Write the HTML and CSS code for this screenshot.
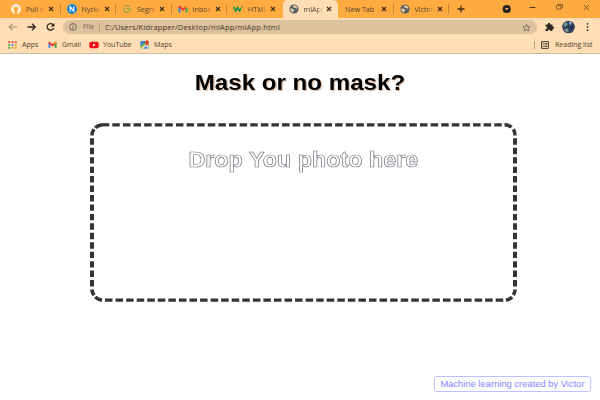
FILE: index.html
```
<!DOCTYPE html>
<html lang="en">
<head>
<meta charset="utf-8">
<title>mlApp</title>
<link rel="stylesheet" href="styles.css">
</head>
<body>
<svg class="defs" width="0" height="0" aria-hidden="true">
  <symbol id="x" viewBox="0 0 6 6"><path d="M1 1l4 4M5 1L1 5" stroke="#44301a" stroke-width="1.25"/></symbol>
  <symbol id="globe" viewBox="0 0 10 10"><circle cx="5" cy="5" r="4.6" fill="#5b6064"/><path d="M1.2 4.8Q3 4 4 5.3Q6 5.3 5 6.8Q3.8 7 4 8.7Q1.3 7.8 1.2 4.8M4.6 1.2Q7.3 1 8.5 3.8L7.3 4.7L6.2 3.8L4.5 3.7L4 2.5Z" fill="#eccfa8"/></symbol>
  <symbol id="gmail" viewBox="0 0 10 8"><path d="M1.5 7.5V2" stroke="#4285f4" stroke-width="2"/><path d="M8.5 7.5V2" stroke="#34a853" stroke-width="2"/><path d="M.7 1.3L5 4.6L9.3 1.3" fill="none" stroke="#e83e32" stroke-width="2"/><path d="M7.7 2.6L9.4 1.2" stroke="#fbbc04" stroke-width="1.8"/></symbol>
</svg>
<header class="browser">
  <div class="tabs">
    <div class="tab"><svg class="fav" viewBox="0 0 10 10"><circle cx="5" cy="5" r="4.8" fill="#fff5e6"/><path d="M3.7 9.8V8Q2.3 5.8 2.6 4.3L2.7 2.4L4 3Q5 2.7 6 3L7.3 2.4L7.4 4.3Q7.7 6 6.3 7.2V9.8Z" fill="#ffab40"/></svg><span class="title">Pull re</span><svg class="x"><use href="#x"/></svg></div>
    <div class="tab"><svg class="fav" viewBox="0 0 10 10"><circle cx="5" cy="5" r="5" fill="#1685d5"/><path d="M3.3 7.5V2.7L6.7 7.3V2.5" fill="none" stroke="#fff" stroke-width="1.1"/></svg><span class="title">Nycke</span><svg class="x"><use href="#x"/></svg></div>
    <div class="tab"><svg class="fav" viewBox="0 0 10 10"><path d="M8.5 3Q5 .2 2 3.2M4 5H8.5Q8 9 4.5 8.6Q2 8 1.4 5.5M1 4.5H3" fill="none" stroke="#8ba653" stroke-width="1.1"/></svg><span class="title">Segm</span><svg class="x"><use href="#x"/></svg></div>
    <div class="tab"><svg class="fav"><use href="#gmail" y="1" width="10" height="8"/></svg><span class="title">Inbox</span><svg class="x"><use href="#x"/></svg></div>
    <div class="tab nosep"><svg class="fav" viewBox="0 0 10 10"><path d="M.8 3L2.6 7L4.6 3.5L6.5 7L8 4.5" fill="none" stroke="#199447" stroke-width="1.7"/><path d="M8.5 2.2L9.3 4" stroke="#199447"/></svg><span class="title">HTML</span><svg class="x"><use href="#x"/></svg></div>
    <div class="tab active"><svg class="fav"><use href="#globe"/></svg><span class="title">mlApp</span><svg class="x"><use href="#x"/></svg></div>
    <div class="tab"><span class="title wide">New Tab</span><svg class="x"><use href="#x"/></svg></div>
    <div class="tab"><svg class="fav"><use href="#globe"/></svg><span class="title">Victor</span><svg class="x"><use href="#x"/></svg></div>
    <svg class="controls" viewBox="0 0 152 18"><path d="M8.500 9h7M12 5.500v7" stroke="#3c2b18" stroke-width="1.300"/><circle cx="57.700" cy="9" r="4.100" fill="#29231d"/><path d="M56 8h3.600l-1.800 2.300z" fill="#ffc77e"/><path d="M80.500 7.500h6" stroke="#503719"/><path d="M107.500 5.500h4.500v3.500h-4.500zM109 5.500v-1.200h4.500v3.500h-1.300" fill="none" stroke="#604322" stroke-width=".7"/><path d="M135 5l5 5M140 5l-5 5" stroke="#604322" stroke-width=".8"/></svg>
  </div>
  <div class="toolbar">
    <svg class="nav" viewBox="0 0 58 18"><path d="M17 9H9.500M12.500 5.800L9.300 9L12.500 12.200" fill="none" stroke="#a28e75" stroke-width="1.1"/><path d="M27.500 9H35M32 5.800L35.200 9L32 12.200" fill="none" stroke="#302820" stroke-width="1.3"/><path d="M53 6.700A3.400 3.200 0 1 0 53.700 10" fill="none" stroke="#302820" stroke-width="1.3"/><path d="M54.500 5V8.500H50.700Z" fill="#302820"/></svg>
    <div class="address">
      <svg class="info" viewBox="0 0 8 8"><circle cx="4" cy="4" r="3.400" fill="none" stroke="#665a49" stroke-width=".9"/><path d="M4 3.500V6M4 2V2.800" stroke="#665a49"/></svg>
      <span class="file">File</span><i class="bar"></i><span class="url">C:/Users/Kidrapper/Desktop/mlApp/mlApp.html</span>
      <svg class="star" viewBox="0 0 10 10"><path d="M5 1.200L6.100 3.900L9 4.100L6.800 6L7.500 8.800L5 7.300L2.500 8.800L3.200 6L1 4.100L3.900 3.900Z" fill="none" stroke="#63594c" stroke-width=".8"/></svg>
    </div>
    <svg class="actions" viewBox="0 0 64 18"><path d="M8.500 6.500h2.300q0-1.700 1.300-1.700t1.300 1.700h2.100v2.100q1.700 0 1.700 1.200t-1.700 1.200v2.100h-2.200q0-1.500-1.200-1.500t-1.200 1.500h-2.400v-2.200q1.600 0 1.600-1.200t-1.600-1.200z" fill="#2c2926"/><circle cx="31.500" cy="9" r="6.300" fill="#34405d"/><path d="M26.500 6l3-2 1 3-3 2zM27 12l3-2 2 3-2 1.500z" fill="#759b8e"/><path d="M32 3.500l3 1-2 3z" fill="#a4b9db"/><path d="M33 8l3 1-2 4z" fill="#202656"/><g fill="#40362b"><circle cx="50.500" cy="5.800" r=".9"/><circle cx="50.500" cy="9" r=".9"/><circle cx="50.500" cy="12.200" r=".9"/></g></svg>
  </div>
  <nav class="bookmarks">
    <svg class="bi apps" viewBox="0 0 9 8"><g stroke-width="1.800" stroke-dasharray="2 1.300"><path d="M.2 1.200h9" stroke="#e35345"/><path d="M.2 4h3" stroke="#42a65a"/><path d="M3.500 4h3" stroke="#4c81d5"/><path d="M6.800 4h3" stroke="#eca71c"/><path d="M.2 6.800h3" stroke="#42a65a"/><path d="M3.500 6.800h6" stroke="#eca71c"/></g></svg><span class="b1">Apps</span>
    <svg class="bi gm"><use href="#gmail" width="9" height="7.500"/></svg><span class="b2">Gmail</span>
    <svg class="bi yt" viewBox="0 0 10 8"><rect y=".7" x=".3" width="9.400" height="6.600" rx="1.800" fill="#f20b12"/><path d="M4 2.600V5.400L6.600 4Z" fill="#fff"/></svg><span class="b3">YouTube</span>
    <svg class="bi mp" viewBox="0 0 9 9"><path d="M.5 1h8v7.500h-8z" fill="#42a65a"/><path d="M1 8.500l7-6v6z" fill="#e9e4d8"/><path d="M.5 6l5-5h-5z" fill="#4386e8"/><path d="M3.500 8.500L5.800 6l2.700 2.500z" fill="#4386e8"/><path d="M1 8L7 2" stroke="#f6c33a"/><path d="M6.800 6Q4.900 3.800 5 2.300Q5.200.3 6.900.3T8.800 2.300Q8.800 3.800 6.800 6" fill="#de4335"/></svg><span class="b4">Maps</span>
    <i class="bar end"></i>
    <svg class="bi list" viewBox="0 0 8 8"><path d="M.6.600h6.800v6.800H.6z" fill="none" stroke="#493c2c" stroke-width="1"/><path d="M1.800 2.500h1M3.400 2.500h3M1.800 4h1M3.400 4h3M1.800 5.500h1M3.400 5.500h3" stroke="#493c2c" stroke-width=".8"/></svg><span class="b5">Reading list</span>
  </nav>
</header>
<main>
  <h1><span>Mask or no mask?</span></h1>
  <section class="drop">
    <svg class="outline" viewBox="0 0 427 179" aria-hidden="true"><g fill="none" stroke="#333436"><path d="M22.300 1.800H412" stroke-width="3.200" stroke-dasharray="7.500 3.110"/><path d="M11.700 1.800H19.200" stroke-width="3.200"/><path d="M15 177.200H414" stroke-width="3.200" stroke-dasharray="7.500 3.060"/><path d="M2 15.300V164" stroke-width="4" stroke-dasharray="6.400 3.050"/><path d="M425 15.300V164" stroke-width="4" stroke-dasharray="6.400 3.050"/><path d="M2 12.500Q2 9 4 6.300M5.200 4.800Q7.500 2.500 12 1.800M414.500 1.800Q419 2 421.500 4.300M423.300 6.300Q425 8.500 425 12.500M2 166.500Q2 169.500 4 172.300M5.200 174Q8 176.500 12 177.200M425 166.500Q425 169.500 423.300 172M422 174Q420 176.200 416 177.200" stroke-width="3.600"/></g></svg>
    <h2><span>Drop You photo here</span></h2>
  </section>
  <footer><span>Machine learning created by Victor</span></footer>
</main>
</body>
</html>
```
FILE: styles.css
```
* { box-sizing: border-box; }
body { margin: 0; width: 600px; height: 400px; overflow: hidden; background: #fff; font-family: "Liberation Sans", Arial, sans-serif; }
svg { display: block; flex: none; }
.defs { position: absolute; }
.browser { height: 54px; background: #ffdeb5; border-bottom: 1px solid #c9bbaa; font: 7px/12px "Open Sans", sans-serif; color: #51412e; }
.tabs { display: flex; height: 18px; background: #ffab40; padding-left: 5px; }
.tab { width: 55.5px; height: 18px; padding: 0 5px 0 6px; display: flex; align-items: center; position: relative; flex: none; }
.tab:not(.active):not(.nosep)::after { content: ""; position: absolute; right: 0; top: 4px; width: 1px; height: 10px; background: #c58a41; }
.tab.active { background: #ffdeb5; border-radius: 5px 5px 0 0; }
.tab.active + .tab::after { display: none; }
.tab:nth-child(7)::after { display: block !important; }
.fav { width: 10px; height: 10px; margin-right: 5px; }
.title { width: 19px; overflow: hidden; white-space: nowrap; font-size: 7.2px; -webkit-mask-image: linear-gradient(to right, #000 65%, transparent); mask-image: linear-gradient(to right, #000 65%, transparent); }
.title.wide { width: 34px; margin-left: 1px; -webkit-mask-image: none; mask-image: none; }
.x { width: 6px; height: 6px; margin-left: auto; margin-right: 1.5px; }
.controls { width: 152px; height: 18px; margin-left: auto; margin-right: -1px; }
.toolbar { display: flex; height: 18px; align-items: center; }
.nav { width: 58px; height: 18px; margin-right: 5px; }
.address { width: 474px; height: 14px; border-radius: 7px; background: #dcc29d; display: flex; align-items: center; padding: 0 5px 0 6px; }
.info { width: 8px; height: 8px; margin-right: 6px; }
.file { width: 16px; color: #796850; }
.bar { width: 1px; height: 8px; background: #b7a07f; }
.url { margin-left: 5px; font-size: 7.5px; letter-spacing: .17px; white-space: nowrap; color: #45372a; }
.star { width: 9px; height: 9px; margin-left: auto; margin-right: 1px; }
.actions { width: 64px; height: 18px; margin-right: -1px; }
.bookmarks { display: flex; height: 17px; align-items: center; padding: 0 8px; white-space: nowrap; }
.bi { width: 9px; height: 8px; }
.bookmarks span { margin-left: 5px; }
.b1 { width: 26px; }
.b2 { width: 27px; }
.yt { width: 10px; }
.bookmarks .b3 { width: 37px; margin-left: 4px; }
.mp { height: 9px; }
.end { margin-left: auto; margin-right: 6px; }
.list { width: 8px; }
.bookmarks .b5 { width: 37px; margin-left: 6px; }
h1, h2 { margin: 0; text-align: center; white-space: nowrap; }
h1 span, h2 span { display: inline-block; }
main { display: flex; flex-direction: column; align-items: center; height: 346px; }
h1 { height: 69px; padding-top: 16px; font-size: 22px; line-height: 26px; color: #000; text-shadow: 1px 1px 1px #dfb99c; }
h1 span { transform: scaleX(1.096); }
.drop { width: 427px; height: 179px; margin-left: 7px; position: relative; }
.outline { position: absolute; inset: 0; width: 427px; height: 179px; }
h2 { padding-top: 24px; font-size: 22px; line-height: 26px; color: #fff; -webkit-text-stroke: .65px #6c727b; }
h2 span { transform: scaleX(1.061); }
footer { margin: auto 9px 8px auto; width: 157px; height: 16px; border: 1px solid #bfc0ff; border-radius: 2.5px; color: #8587ff; font-size: 9.4px; line-height: 14px; text-align: center; white-space: nowrap; }
footer span { display: inline-block; }
```
